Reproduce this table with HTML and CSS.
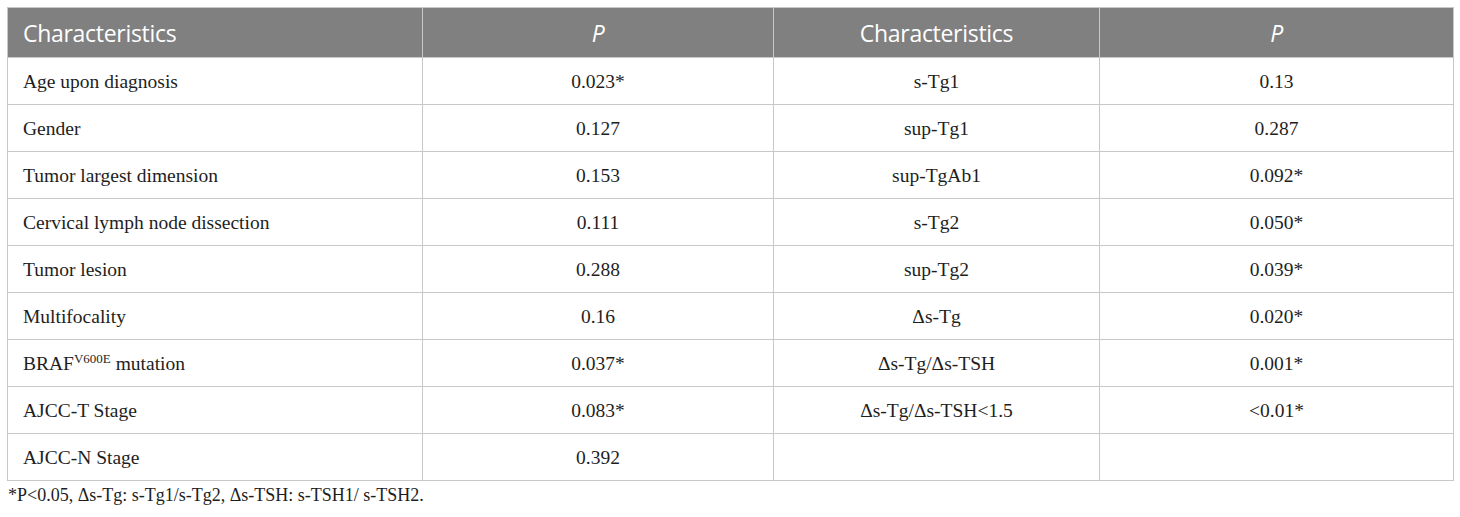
FILE: index.html
```html
<!DOCTYPE html>
<html>
<head>
<meta charset="utf-8">
<link rel="stylesheet" href="styles.css">
</head>
<body>
<div class="wrap">
<table class="tbl">
<colgroup>
<col class="c1"><col class="c2"><col class="c3"><col class="c4">
</colgroup>
<thead>
<tr><th class="left">Characteristics</th><th><i>P</i></th><th>Characteristics</th><th><i>P</i></th></tr>
</thead>
<tbody>
<tr><td class="left">Age upon diagnosis</td><td>0.023*</td><td>s-Tg1</td><td>0.13</td></tr>
<tr><td class="left">Gender</td><td>0.127</td><td>sup-Tg1</td><td>0.287</td></tr>
<tr><td class="left">Tumor largest dimension</td><td>0.153</td><td>sup-TgAb1</td><td>0.092*</td></tr>
<tr><td class="left">Cervical lymph node dissection</td><td>0.111</td><td>s-Tg2</td><td>0.050*</td></tr>
<tr><td class="left">Tumor lesion</td><td>0.288</td><td>sup-Tg2</td><td>0.039*</td></tr>
<tr><td class="left">Multifocality</td><td>0.16</td><td>Δs-Tg</td><td>0.020*</td></tr>
<tr><td class="left">BRAF<sup>V600E</sup> mutation</td><td>0.037*</td><td>Δs-Tg/Δs-TSH</td><td>0.001*</td></tr>
<tr><td class="left">AJCC-T Stage</td><td>0.083*</td><td>Δs-Tg/Δs-TSH&lt;1.5</td><td>&lt;0.01*</td></tr>
<tr><td class="left">AJCC-N Stage</td><td>0.392</td><td></td><td></td></tr>
</tbody>
</table>
<p class="note">*P&lt;0.05, Δs-Tg: s-Tg1/s-Tg2, Δs-TSH: s-TSH1/ s-TSH2.</p>
</div>
</body>
</html>
```
FILE: styles.css
```css
html, body {
  margin: 0;
  padding: 0;
  background: #ffffff;
}
.wrap {
  padding: 7px 0 0 7px;
}
.tbl {
  border-collapse: collapse;
  table-layout: fixed;
  width: 1446px;
}
.c1 { width: 415px; }
.c2 { width: 351px; }
.c3 { width: 326px; }
.c4 { width: 354px; }
.tbl th, .tbl td {
  border: 1px solid #c8c8c8;
  text-align: center;
  padding: 0 15px;
  white-space: nowrap;
}
.tbl th {
  background: #808080;
  color: #ffffff;
  font-family: "Open Sans", "Liberation Sans", sans-serif;
  font-weight: normal;
  font-size: 23px;
  height: 49px;
  line-height: 26px;
  letter-spacing: -0.3px;
}
.tbl th i {
  font-style: italic;
}
.tbl td {
  font-family: "Liberation Serif", "Times New Roman", serif;
  font-size: 19.5px;
  line-height: 22px;
  color: #1e1e1e;
  height: 47px;
  box-sizing: border-box;
  padding-top: 2px;
  padding-bottom: 0;
}
.tbl .left {
  text-align: left;
}
.tbl sup {
  font-size: 13px;
  line-height: 0;
  vertical-align: 0;
  position: relative;
  top: -7px;
}
.note {
  margin: 4px 0 0 1px;
  font-family: "Liberation Serif", "Times New Roman", serif;
  font-size: 18px;
  color: #1e1e1e;
}
```
